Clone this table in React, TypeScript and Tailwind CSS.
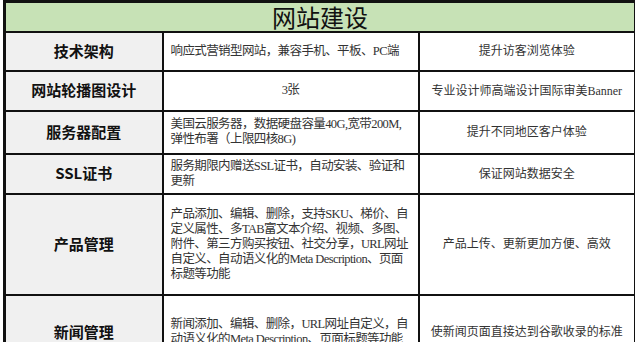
import React from 'react';

type Row = {
  label: string;
  lines: string[];
  benefit: string;
  h: string;
  center?: boolean;
};

const rows: Row[] = [
  { label: '技术架构', lines: ['响应式营销型网站，兼容手机、平板、PC端'], benefit: '提升访客浏览体验', h: 'h-[39px]' },
  { label: '网站轮播图设计', lines: ['3张'], benefit: '专业设计师高端设计国际审美Banner', h: 'h-[40px]', center: true },
  {
    label: '服务器配置',
    lines: ['美国云服务器，数据硬盘容量40G,宽带200M,', '弹性布署（上限四核8G)'],
    benefit: '提升不同地区客户体验',
    h: 'h-[43px]',
  },
  {
    label: 'SSL证书',
    lines: ['服务期限内赠送SSL证书，自动安装、验证和', '更新'],
    benefit: '保证网站数据安全',
    h: 'h-[40px]',
  },
  {
    label: '产品管理',
    lines: [
      '产品添加、编辑、删除，支持SKU、梯价、自',
      '定义属性、多TAB富文本介绍、视频、多图、',
      '附件、第三方购买按钮、社交分享，URL网址',
      '自定义、自动语义化的Meta Description、页面',
      '标题等功能',
    ],
    benefit: '产品上传、更新更加方便、高效',
    h: 'h-[101px]',
  },
  {
    label: '新闻管理',
    lines: ['新闻添加、编辑、删除，URL网址自定义，自', '动语义化的Meta Description、页面标题等功能'],
    benefit: '使新闻页面直接达到谷歌收录的标准',
    h: 'h-[76px]',
  },
];

export default function App() {
  return (
    <div className="w-[635px] h-[342px] overflow-hidden bg-white">
      <table
        className="ml-[3px] w-[631px] border-collapse border-[3px] border-[#111] table-fixed"
        style={{ fontFamily: '"Liberation Serif", "Noto Sans CJK SC", serif' }}
      >
        <colgroup>
          <col className="w-[158px]" />
          <col className="w-[256px]" />
          <col className="w-[217px]" />
        </colgroup>
        <tbody>
          <tr className="h-[30px]">
            <td
              colSpan={3}
              className="bg-[#c7e2b6] border-[2px] border-[#111] text-center text-[24px] leading-[26px] text-[#111]"
              style={{ fontFamily: '"Noto Sans CJK SC", sans-serif' }}
            >
              网站建设
            </td>
          </tr>
          {rows.map((r) => (
            <tr key={r.label} className={r.h}>
              <td
                className="bg-[#f0f0f0] border-[2px] border-[#111] text-center text-[15px] font-bold text-[#111]"
                style={{ fontFamily: '"Noto Sans CJK SC", sans-serif' }}
              >
                {r.label}
              </td>
              <td
                className={`border-[2px] border-[#111] px-[7px] text-[12.5px] leading-[15px] text-[#333] whitespace-nowrap overflow-hidden ${
                  r.center ? 'text-center' : 'text-left'
                }`}
              >
                {r.lines.map((l, i) => (
                  <div key={i} className="tracking-[-0.6px]">
                    {l}
                  </div>
                ))}
              </td>
              <td className="border-[2px] border-[#111] text-center text-[12px] text-[#333] whitespace-nowrap">
                {r.benefit}
              </td>
            </tr>
          ))}
        </tbody>
      </table>
    </div>
  );
}
